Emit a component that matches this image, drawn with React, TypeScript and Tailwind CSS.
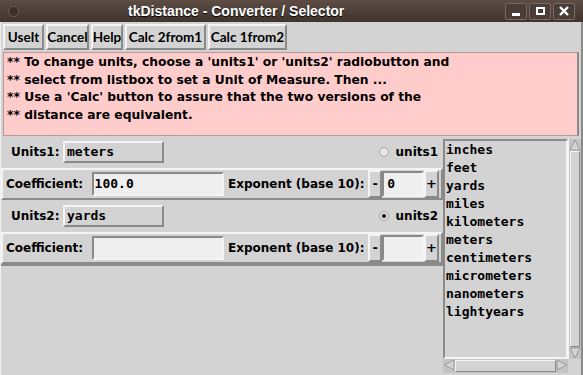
import React from "react";

const ui = "font-['DejaVu_Sans',sans-serif] font-bold";
const btnFont = "font-['Lato',sans-serif] font-bold";
const mono = "font-['DejaVu_Sans_Mono',monospace] font-bold";
const raised =
  "border-2 border-t-[#f4f4f4] border-l-[#f4f4f4] border-r-[#8a8a8a] border-b-[#8a8a8a]";
const sunken =
  "border-2 border-t-[#8a8a8a] border-l-[#8a8a8a] border-r-[#f4f4f4] border-b-[#f4f4f4]";

const UNITS = [
  "inches",
  "feet",
  "yards",
  "miles",
  "kilometers",
  "meters",
  "centimeters",
  "micrometers",
  "nanometers",
  "lightyears",
];

const BUTTONS: [string, string][] = [
  ["UseIt", "w-[41px]"],
  ["Cancel", "w-[43px]"],
  ["Help", "w-[32px]"],
  ["Calc 2from1", "w-[81px]"],
  ["Calc 1from2", "w-[79px]"],
];

function TkButton({ label, w }: { label: string; w: string }) {
  return (
    <div
      className={`${raised} ${w} ${btnFont} h-[26px] flex items-center justify-center text-[13.5px] text-black bg-[#d3d3d3] whitespace-nowrap`}
    >
      {label}
    </div>
  );
}

function UnitsRow({ n, value, on }: { n: number; value: string; on: boolean }) {
  return (
    <div className="h-[32px] flex items-center pl-[10px] pr-[5px]">
      <span className="text-[12px] w-[52px]">Units{n}:</span>
      <div
        className={`${raised} w-[101px] h-[22px] flex items-center pl-[2px] text-[13px] ${mono}`}
      >
        {value}
      </div>
      <div className="flex-1" />
      <div className="w-[10px] h-[10px] rounded-full border border-[#a8a8a8] bg-[#e4e4e4] flex items-center justify-center mr-[7px]">
        {on && <div className="w-[4px] h-[4px] rounded-full bg-black" />}
      </div>
      <span className="text-[12px]">units{n}</span>
    </div>
  );
}

function CoefRow({ coef, exp }: { coef: string; exp: string }) {
  return (
    <div className={`${raised} h-[32px] flex items-center pl-[3px] pr-[2px]`}>
      <span className="text-[12px] w-[86px] whitespace-nowrap">Coefficient:</span>
      <div
        className={`${sunken} w-[133px] h-[24px] bg-[#efefef] flex items-center pl-[1px] text-[13px] ${mono}`}
      >
        {coef}
      </div>
      <span className="text-[12px] ml-[4px] w-[141px] whitespace-nowrap">Exponent (base 10):</span>
      <div className={`${raised} w-[14px] h-[28px] flex items-center justify-center text-[13px]`}>
        -
      </div>
      <div
        className={`${sunken} w-[42px] h-[26px] bg-[#efefef] flex items-center pl-[3px] text-[13px] ${mono}`}
      >
        {exp}
      </div>
      <div className={`${raised} w-[15px] h-[28px] flex items-center justify-center text-[13px]`}>
        +
      </div>
    </div>
  );
}

function Arrow({ dir }: { dir: "up" | "down" | "left" | "right" }) {
  const pts = {
    up: "6,1 11,11 1,11",
    down: "1,1 11,1 6,11",
    left: "1,6 11,1 11,11",
    right: "1,1 11,6 1,11",
  }[dir];
  return (
    <svg width="12" height="12" viewBox="0 0 12 12">
      <polygon points={pts} fill="#d3d3d3" stroke="#9a9a9a" strokeWidth="1" />
    </svg>
  );
}

export default function App() {
  return (
    <div className={`w-[583px] h-[375px] bg-[#d3d3d3] flex flex-col overflow-hidden ${ui}`}>
      <div className="h-[22px] bg-gradient-to-b from-[#5e4d44] to-[#3f3430] flex items-center px-[8px] shrink-0">
        <div className="w-[11px] h-[11px] rounded-full bg-[#3a302b] border border-[#6e5e55]" />
        <div className="flex-1 pl-[109px] text-white font-['Liberation_Sans',sans-serif] font-bold text-[14px] [text-shadow:0_1px_1px_#000]">
          tkDistance - Converter / Selector
        </div>
        <div className="flex gap-[2px]">
          {["min", "max", "close"].map((k) => (
            <div
              key={k}
              className="w-[22px] h-[17px] border border-[#7a6a62] rounded-[2px] bg-[#4a3d37] flex items-center justify-center"
            >
              {k === "min" && <div className="w-[8px] h-[3px] bg-white mt-[6px]" />}
              {k === "max" && <div className="w-[9px] h-[8px] border-2 border-white" />}
              {k === "close" && (
                <svg width="10" height="10" viewBox="0 0 10 10">
                  <path d="M1 1 L9 9 M9 1 L1 9" stroke="white" strokeWidth="2.4" />
                </svg>
              )}
            </div>
          ))}
        </div>
      </div>

      <div className="flex-1 flex flex-col border-l border-[#efefef] border-r-2 border-r-[#8a8a8a]">
        <div className="h-[29px] flex items-center gap-[2px] px-[2px] pt-[1px]">
          {BUTTONS.map(([b, w]) => (
            <TkButton key={b} label={b} w={w} />
          ))}
        </div>

        <div className="mx-[2px] mt-[1px] h-[84px] bg-[#ffcccc] border border-[#b89a9a] border-r-2 border-r-[#8a8a8a] pl-[3px] pt-[1px] text-[12.3px] leading-[17.6px] text-black whitespace-nowrap">
          <div>** To change units, choose a 'units1' or 'units2' radiobutton and</div>
          <div>** select from listbox to set a Unit of Measure. Then ...</div>
          <div>** Use a 'Calc' button to assure that the two versions of the</div>
          <div>** distance are equivalent.</div>
        </div>

        <div className="flex-1 flex">
          <div className="w-[442px] flex flex-col">
            <UnitsRow n={1} value="meters" on={false} />
            <CoefRow coef="100.0" exp="0" />
            <UnitsRow n={2} value="yards" on={true} />
            <CoefRow coef="" exp="" />
            <div className="flex-1 border-t-2 border-t-[#8a8a8a]" />
          </div>

          <div className="flex-1 flex flex-col pt-[3px] pb-[2px]">
            <div className="flex flex-1">
              <div className={`${sunken} flex-1 pl-[1px] text-[13px] leading-[18px] ${mono}`}>
                {UNITS.map((u) => (
                  <div key={u}>{u}</div>
                ))}
              </div>
              <div className="w-[13px] flex flex-col bg-[#c4c4c4] border-l border-[#f4f4f4]">
                <Arrow dir="up" />
                <div className="flex-1 mx-[1px] border border-[#f4f4f4] border-r-[#8a8a8a] border-b-[#8a8a8a] bg-[#d3d3d3]" />
                <Arrow dir="down" />
              </div>
            </div>
            <div className="h-[14px] flex mr-[13px] bg-[#c4c4c4]">
              <Arrow dir="left" />
              <div className="flex-1 my-[1px] border border-[#f4f4f4] border-r-[#8a8a8a] border-b-[#8a8a8a] bg-[#d3d3d3]" />
              <Arrow dir="right" />
            </div>
          </div>
        </div>
      </div>
    </div>
  );
}
